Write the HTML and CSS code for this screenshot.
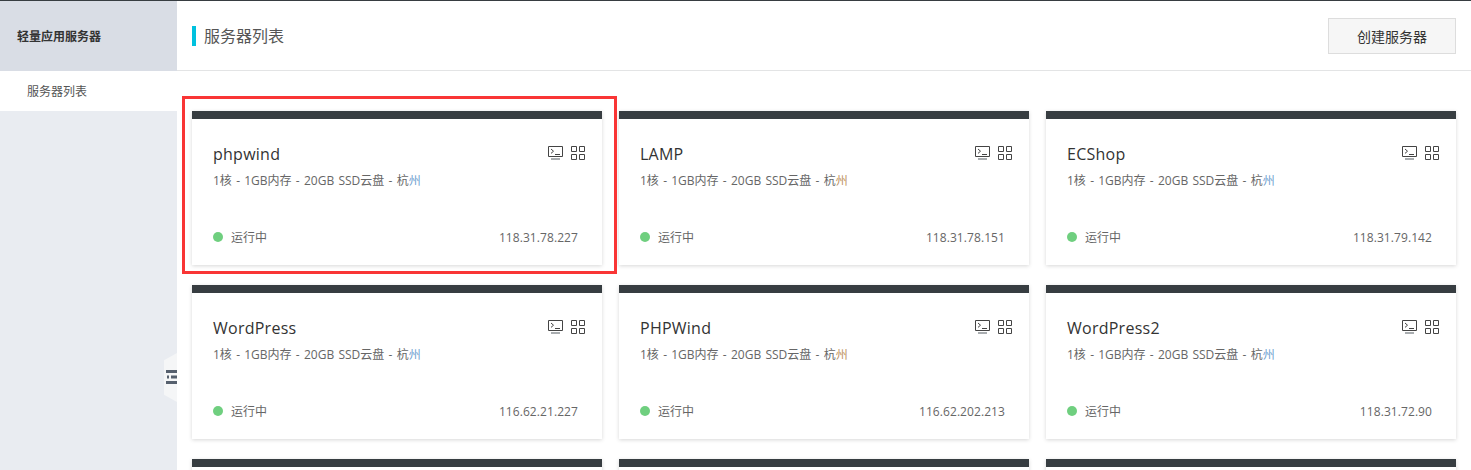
FILE: index.html
```html
<!DOCTYPE html>
<html lang="zh-CN">
<head>
<meta charset="utf-8">
<title>服务器列表</title>
<link rel="stylesheet" href="styles.css">
</head>
<body>
<svg class="defs" width="0" height="0" aria-hidden="true">
  <symbol id="i-term" viewBox="0 0 16 16">
    <path d="M.5.5h14v10H.5z" fill="none" stroke="currentColor"/>
    <path d="M3 3l2.500 2.200L3 7.400" fill="none" stroke="currentColor"/>
    <path d="M7 8.500h5" fill="none" stroke="currentColor"/>
    <path d="M3 13h9" fill="none" stroke="#a9adb0" stroke-width="2"/>
  </symbol>
  <symbol id="i-grid" viewBox="0 0 14 14">
    <path d="M.5.5h5v5h-5zM8.500.5h5v5h-5zM.5 8.500h5v5h-5zM8.500 8.500h5v5h-5z" fill="none" stroke="currentColor"/>
  </symbol>
</svg>
<div class="topline"></div>
<div class="layout">
  <aside class="sidebar">
    <div class="side-title">轻量应用服务器</div>
    <div class="side-item">服务器列表</div>
    <div class="collapse">
      <svg width="11" height="14" viewBox="0 0 11 14"><path d="M0 0h11v3H0zM0 11h11v3H0zM1 5.500h2v3H1zM5 5.500h6v3H5z" fill="#56606e"/></svg>
    </div>
  </aside>
  <main class="main">
    <header class="head">
      <h1 class="page-title">服务器列表</h1>
      <button class="create" type="button">创建服务器</button>
    </header>
    <div class="cards">
      <article class="card">
        <div class="card-top"><h2 class="name">phpwind</h2><div class="icons"><svg class="term"><use href="#i-term"/></svg><svg class="grid"><use href="#i-grid"/></svg></div></div>
        <p class="spec">1核 - 1GB内存 - 20GB SSD云盘 - 杭<span class="blue">州</span></p>
        <div class="card-foot"><span class="status"><i class="dot"></i>运行中</span><span class="ip">118.31.78.227</span></div>
      </article>
      <article class="card">
        <div class="card-top"><h2 class="name">LAMP</h2><div class="icons"><svg class="term"><use href="#i-term"/></svg><svg class="grid"><use href="#i-grid"/></svg></div></div>
        <p class="spec">1核 - 1GB内存 - 20GB SSD云盘 - 杭<span class="orange">州</span></p>
        <div class="card-foot"><span class="status"><i class="dot"></i>运行中</span><span class="ip">118.31.78.151</span></div>
      </article>
      <article class="card">
        <div class="card-top"><h2 class="name">ECShop</h2><div class="icons"><svg class="term"><use href="#i-term"/></svg><svg class="grid"><use href="#i-grid"/></svg></div></div>
        <p class="spec">1核 - 1GB内存 - 20GB SSD云盘 - 杭<span class="blue">州</span></p>
        <div class="card-foot"><span class="status"><i class="dot"></i>运行中</span><span class="ip">118.31.79.142</span></div>
      </article>
      <article class="card">
        <div class="card-top"><h2 class="name">WordPress</h2><div class="icons"><svg class="term"><use href="#i-term"/></svg><svg class="grid"><use href="#i-grid"/></svg></div></div>
        <p class="spec">1核 - 1GB内存 - 20GB SSD云盘 - 杭<span class="blue">州</span></p>
        <div class="card-foot"><span class="status"><i class="dot"></i>运行中</span><span class="ip">116.62.21.227</span></div>
      </article>
      <article class="card">
        <div class="card-top"><h2 class="name">PHPWind</h2><div class="icons"><svg class="term"><use href="#i-term"/></svg><svg class="grid"><use href="#i-grid"/></svg></div></div>
        <p class="spec">1核 - 1GB内存 - 20GB SSD云盘 - 杭<span class="orange">州</span></p>
        <div class="card-foot"><span class="status"><i class="dot"></i>运行中</span><span class="ip">116.62.202.213</span></div>
      </article>
      <article class="card">
        <div class="card-top"><h2 class="name">WordPress2</h2><div class="icons"><svg class="term"><use href="#i-term"/></svg><svg class="grid"><use href="#i-grid"/></svg></div></div>
        <p class="spec">1核 - 1GB内存 - 20GB SSD云盘 - 杭<span class="blue">州</span></p>
        <div class="card-foot"><span class="status"><i class="dot"></i>运行中</span><span class="ip">118.31.72.90</span></div>
      </article>
      <article class="card"></article>
      <article class="card"></article>
      <article class="card"></article>
    </div>
  </main>
</div>
<div class="highlight"></div>
</body>
</html>
```
FILE: styles.css
```css
* { box-sizing: border-box; }
html, body { margin: 0; height: 470px; overflow: hidden; }
body { background: #fff; font-family: "Open Sans", "Noto Sans CJK SC", sans-serif; color: #555; position: relative; }
.defs { position: absolute; }
.topline { height: 1px; background: #373d41; }
.layout { display: flex; height: 469px; }

.sidebar { width: 177px; flex: none; background: #e9ecf1; position: relative; }
.side-title { height: 70px; line-height: 72px; padding-left: 17px; background: #d9dde5; font-size: 12px; font-weight: 700; color: #333; }
.side-item { height: 40px; line-height: 42px; padding-left: 27px; background: #fff; font-size: 12px; color: #555; }
.collapse { position: absolute; left: 164px; top: 352px; width: 13px; height: 49px; background: #f5f6f7;
  clip-path: polygon(0 15%, 100% 0, 100% 100%, 0 85%); display: flex; align-items: center; justify-content: flex-end; padding-bottom: 2px; }

.main { flex: 1; min-width: 0; }
.head { height: 70px; border-bottom: 1px solid #e3e4e5; display: flex; align-items: center; justify-content: space-between; padding: 0 15px; }
.page-title { margin: 0; font-size: 16px; font-weight: 400; line-height: 20px; color: #555; border-left: 4px solid #00c1de; padding-left: 8px; }
.create { width: 128px; height: 36px; background: #f6f6f6; border: 1px solid #ddd; font: inherit; font-size: 14px; color: #333; padding: 0; }

.cards { display: grid; grid-template-columns: repeat(3, 410px); column-gap: 17px; row-gap: 20px; padding: 40px 0 0 15px; }
.card { height: 154px; border-top: 8px solid #373d41; background: #fff; box-shadow: 0 1px 4px rgba(0,0,0,.16); padding: 0 24px 0 21px; display: flex; flex-direction: column; }
.card-top { display: flex; justify-content: space-between; align-items: flex-start; height: 48px; padding-top: 24px; }
.name { margin: 0; font-size: 16px; font-weight: 400; line-height: 22px; letter-spacing: .25px; color: #333; }
.icons { display: flex; gap: 7px; margin-top: 3px; margin-right: -7px; align-items: flex-start; }
.term { width: 16px; height: 16px; color: #444; }
.grid { width: 14px; height: 14px; color: #444; }
.spec { margin: 5px 0 0; font-size: 12px; line-height: 18px; word-spacing: 1.15px; color: #666; }
.blue { color: #6f9fd0; }
.orange { color: #bd9260; }
.card-foot { margin-top: auto; height: 18px; margin-bottom: 19px; display: flex; justify-content: space-between; align-items: center; font-size: 12px; color: #666; }
.ip { letter-spacing: .08px; }
.status { display: flex; align-items: center; }
.dot { width: 10px; height: 10px; border-radius: 50%; background: #6fcf7f; margin-right: 8px; }

.highlight { position: absolute; left: 182px; top: 96px; width: 435px; height: 178px; border: 3px solid #f93535; pointer-events: none; }
```
